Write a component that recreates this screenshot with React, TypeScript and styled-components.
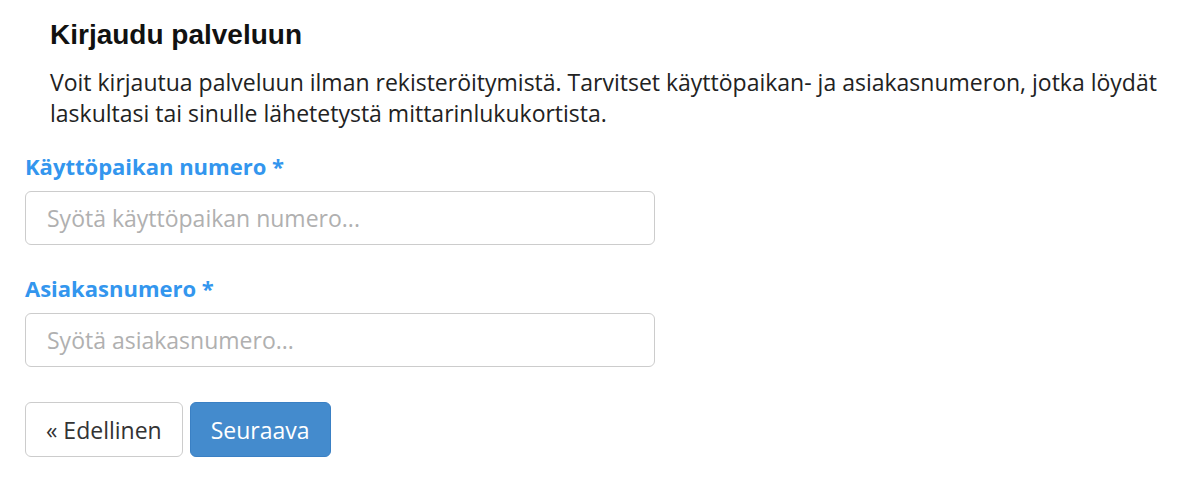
import React from "react";
import styled, { createGlobalStyle } from "styled-components";

const Global = createGlobalStyle`
  html, body { margin: 0; padding: 0; background: #fff; }
  body { font-family: "Open Sans", "Liberation Sans", sans-serif; color: #222; }
  * { box-sizing: border-box; }
`;

const Page = styled.div`
  padding: 19px 25px 0 25px;
  width: 1200px;
`;

const Intro = styled.section`
  padding-left: 25px;
`;

const Title = styled.h1`
  margin: 0;
  font-family: "Liberation Sans", Arial, sans-serif;
  font-weight: 700;
  font-size: 28px;
  line-height: 32px;
  color: #111;
`;

const Lead = styled.p`
  margin: 16px 0 0 0;
  font-size: 23px;
  line-height: 31px;
  color: #222;
`;

const Form = styled.form`
  display: flex;
  flex-direction: column;
`;

const Field = styled.div<{ $top: number }>`
  display: flex;
  flex-direction: column;
  margin-top: ${(p) => p.$top}px;
`;

const Label = styled.label`
  font-weight: 700;
  font-size: 22px;
  line-height: 30px;
  color: #3396ee;
  margin-bottom: 10px;
`;

const Input = styled.input`
  width: 630px;
  height: 54px;
  border: 1px solid #cccccc;
  border-radius: 6px;
  padding: 0 21px;
  font-family: "Open Sans", sans-serif;
  font-size: 23px;
  color: #333;
  outline: none;
  &::placeholder { color: #b0b0b0; }
`;

const Actions = styled.div`
  display: flex;
  gap: 7px;
  margin-top: 35px;
`;

const Button = styled.button<{ $primary?: boolean }>`
  height: 55px;
  padding: 0 20px;
  border-radius: 6px;
  font-family: "Open Sans", sans-serif;
  font-size: 23px;
  cursor: pointer;
  border: 1px solid ${(p) => (p.$primary ? "#3a80c4" : "#cccccc")};
  background: ${(p) => (p.$primary ? "#448bcd" : "#ffffff")};
  color: ${(p) => (p.$primary ? "#ffffff" : "#333333")};
`;

export default function App() {
  return (
    <Page>
      <Global />
      <Intro>
        <Title>Kirjaudu palveluun</Title>
        <Lead>
          Voit kirjautua palveluun ilman rekisteröitymistä. Tarvitset käyttöpaikan- ja asiakasnumeron, jotka löydät laskultasi tai sinulle lähetetystä mittarinlukukortista.
        </Lead>
      </Intro>
      <Form onSubmit={(e) => e.preventDefault()}>
        <Field $top={22}>
          <Label htmlFor="kp">Käyttöpaikan numero *</Label>
          <Input id="kp" placeholder="Syötä käyttöpaikan numero..." />
        </Field>
        <Field $top={28}>
          <Label htmlFor="an">Asiakasnumero *</Label>
          <Input id="an" placeholder="Syötä asiakasnumero..." />
        </Field>
        <Actions>
          <Button type="button">« Edellinen</Button>
          <Button type="submit" $primary>Seuraava</Button>
        </Actions>
      </Form>
    </Page>
  );
}
